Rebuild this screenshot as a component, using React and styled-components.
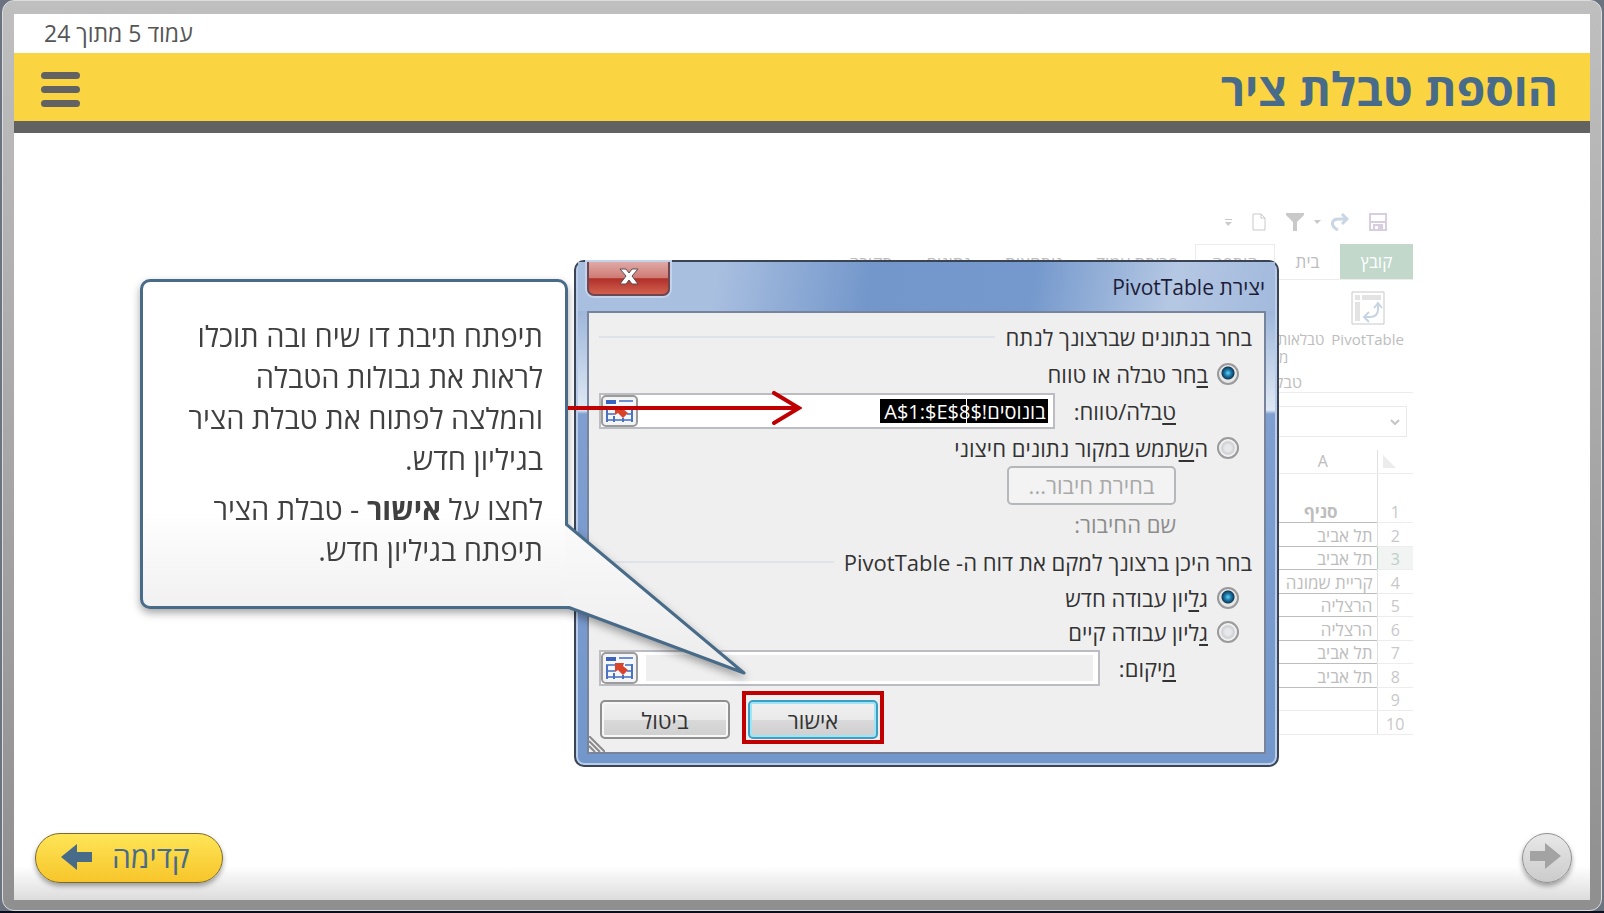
import React from "react";
import styled, { createGlobalStyle } from "styled-components";

const tabs = ["הוספה", "פריסת עמוד", "נוסחאות", "נתונים", "סקירה"];

const rows = [
  { id: 1, text: "סניף", head: true },
  { id: 2, text: "תל אביב" },
  { id: 3, text: "תל אביב", active: true },
  { id: 4, text: "קריית שמונה" },
  { id: 5, text: "הרצליה" },
  { id: 6, text: "הרצליה" },
  { id: 7, text: "תל אביב" },
  { id: 8, text: "תל אביב" },
  { id: 9, text: "" },
  { id: 10, text: "" },
];

export default function App() {
  return (
    <Page>
      <GlobalStyle />
      <Frame>
        <Slide>
          <Counter>עמוד 5 מתוך 24</Counter>
          <Header>
            <Title>הוספת טבלת ציר</Title>
            <MenuButton type='button' aria-label='תפריט'>
              <span />
              <span />
              <span />
            </MenuButton>
          </Header>
          <Stage>
            <Scene>
              <Sheet />
              <PivotDialog />
              <Callout />
            </Scene>
          </Stage>
          <Footer>
            <NextButton type='button'>
              קדימה
              <svg width='31' height='26' viewBox='0 0 31 26'>
                <path d='M0 13 16 0V8H31V18H16V26Z' fill='#486b89' />
              </svg>
            </NextButton>
            <PrevButton type='button' aria-label='אחורה'>
              <svg width='31' height='26' viewBox='0 0 31 26'>
                <path d='M31 13 15 0V8H0V18H15V26Z' fill='#a3a3a3' />
              </svg>
            </PrevButton>
          </Footer>
        </Slide>
      </Frame>
    </Page>
  );
}

function Sheet() {
  return (
    <SheetWrapper>
      <QuickBar>
        <svg width='18' height='18' viewBox='0 0 18 18' fill='none'>
          <path d='M1 1H17V17H1Z' stroke='#d9cde0' strokeWidth='2' />
          <path d='M2 9H16M5 17V12H13V17' stroke='#d9cde0' strokeWidth='2' />
          <path d='M9 13H12V17H9Z' fill='#d9cde0' />
        </svg>
        <FilterGroup>
          <svg width='18' height='18' viewBox='0 0 18 18' fill='none'>
            <path d='M7 17C-1 13 0 6 8 6H16M11 1 16 6 11 11' stroke='#c9d6e4' strokeWidth='3' />
          </svg>
          <svg width='7' height='4' viewBox='0 0 7 4'>
            <path d='M0 0H7L3 4Z' fill='#c9c9c9' />
          </svg>
          <svg width='18' height='18' viewBox='0 0 18 18'>
            <path d='M0 0H18V2L11 9V18H7V9L0 2Z' fill='#c9c9c9' />
          </svg>
        </FilterGroup>
        <svg width='14' height='18' viewBox='0 0 14 18' fill='none'>
          <path d='M1 1H9L13 5V17H1ZM9 1V5H13' stroke='#c9c9c9' strokeWidth='1' />
        </svg>
        <svg width='7' height='9' viewBox='0 0 7 9'>
          <path d='M0 1H7V2H0ZM0 4H7L3 8Z' fill='#c9c9c9' />
        </svg>
      </QuickBar>
      <TabBar>
        <FileTab>קובץ</FileTab>
        <HomeTab>בית</HomeTab>
        {tabs.map((tab, i) => (
          <Tab key={tab} $active={i === 0}>
            {tab}
          </Tab>
        ))}
      </TabBar>
      <Ribbon>
        <RibbonItem>
          <svg width='34' height='34' viewBox='0 0 34 34' fill='none'>
            <path d='M1 1H33V33H1Z' stroke='#c8c8c8' />
            <path d='M4 4H9V9H4ZM11 4H30V9H11ZM4 11H9V30H4Z' fill='#e3e3e3' />
            <path d='M14 26H19Q27 26 27 18V13M23 17 27 12 31 17M18 21 13 26 18 31' stroke='#c6d4e3' strokeWidth='2' />
          </svg>
          PivotTable
        </RibbonItem>
        <RibbonItem>
          <svg width='34' height='34' viewBox='0 0 34 34' fill='none'>
            <circle cx='28' cy='18' r='5' fill='#d3dfec' />
          </svg>
          <span>טבלאות PivotTable</span>
          <span>מומלצות</span>
        </RibbonItem>
        <RibbonGroup>טבלאות</RibbonGroup>
      </Ribbon>
      <FormulaBar>
        <svg width='10' height='6' viewBox='0 0 10 6' fill='none'>
          <path d='M1 1 5 5 9 1' stroke='#c4c4c4' strokeWidth='2' />
        </svg>
      </FormulaBar>
      <Grid>
        <thead>
          <tr>
            <th>
              <svg width='13' height='13' viewBox='0 0 13 13'>
                <path d='M0 0V13H13Z' fill='#ececec' />
              </svg>
            </th>
            <th>A</th>
          </tr>
        </thead>
        <tbody>
          {rows.map((row) => (
            <GridRow key={row.id} $head={row.head} $active={row.active} $filled={row.text !== ""}>
              <th>{row.id}</th>
              <td>{row.text}</td>
            </GridRow>
          ))}
        </tbody>
      </Grid>
    </SheetWrapper>
  );
}

function RangeIcon() {
  return (
    <svg width='28' height='24' viewBox='0 0 28 24'>
      <rect width='28' height='24' fill='#f4f7fd' />
      <path d='M0 1H10V5H0Z' fill='#3b63bd' />
      <path d='M13 2H27M0 9H9M19 9H27M0 15H9M21 15H27M0 21H27' stroke='#6d8fd0' strokeWidth='2' />
      <path d='M1 9V23M8 17V23M17 19V23M26 8V23' stroke='#4a72c0' strokeWidth='2' />
      <path d='M9 7H18L17 10L22 14L17 19L12 14L9 16Z' fill='#d9432a' />
    </svg>
  );
}

function PivotDialog() {
  return (
    <Dialog role='dialog' aria-labelledby='dialog-title'>
      <TitleBar>
        <DialogTitle id='dialog-title'>יצירת PivotTable</DialogTitle>
        <CloseButton type='button' aria-label='סגור'>
          <svg width='20' height='17' viewBox='0 0 20 17'>
            <path
              d='M1 1H7L10 5L13 1H19L13 8L19 16H13L10 12L7 16H1L7 8Z'
              fill='#fff'
              stroke='#5a4a50'
              strokeWidth='1'
            />
          </svg>
        </CloseButton>
      </TitleBar>
      <Client>
        <Section>בחר בנתונים שברצונך לנתח</Section>
        <RadioRow>
          <input type='radio' name='source' defaultChecked />
          <span>
            <u>ב</u>חר טבלה או טווח
          </span>
        </RadioRow>
        <FieldRow>
          <label htmlFor='range'>
            <u>ט</u>בלה/טווח:
          </label>
          <Field>
            <SelectedInput id='range' defaultValue='בונוסים!$A$1:$E$8' />
            <Caret />
            <PickButton type='button' aria-label='בחירת טווח'>
              <RangeIcon />
            </PickButton>
          </Field>
        </FieldRow>
        <RadioRow>
          <input type='radio' name='source' />
          <span>
            ה<u>ש</u>תמש במקור נתונים חיצוני
          </span>
        </RadioRow>
        <FieldRow>
          <ConnectionButton type='button' disabled>
            בחירת חיבור...
          </ConnectionButton>
        </FieldRow>
        <ConnectionName>שם החיבור:</ConnectionName>
        <Section>בחר היכן ברצונך למקם את דוח ה- PivotTable</Section>
        <PlaceGroup>
          <RadioRow $compact>
            <input type='radio' name='place' defaultChecked />
            <span>
              ג<u>ל</u>יון עבודה חדש
            </span>
          </RadioRow>
          <RadioRow $compact>
            <input type='radio' name='place' />
            <span>
              <u>ג</u>ליון עבודה קיים
            </span>
          </RadioRow>
        </PlaceGroup>
        <FieldRow>
          <label htmlFor='location'>
            <u>מ</u>יקום:
          </label>
          <Field>
            <LocationInput id='location' />
            <PickButton type='button' aria-label='בחירת מיקום'>
              <RangeIcon />
            </PickButton>
          </Field>
        </FieldRow>
        <Actions>
          <Highlight>
            <ActionButton type='button' $primary>
              אישור
            </ActionButton>
          </Highlight>
          <ActionButton type='button'>ביטול</ActionButton>
        </Actions>
        <Grip width='16' height='16' viewBox='0 0 16 16'>
          <path d='M0 0 16 16M0 5 11 16M0 10 6 16' stroke='#8a8a8a' strokeWidth='2' />
        </Grip>
      </Client>
    </Dialog>
  );
}

function Callout() {
  return (
    <CalloutWrapper>
      <Bubble>
        <p>תיפתח תיבת דו שיח ובה תוכלו לראות את גבולות הטבלה והמלצה לפתוח את טבלת הציר בגיליון חדש.</p>
        <p>
          לחצו על <b>אישור</b> - טבלת הציר תיפתח בגיליון חדש.
        </p>
        <Tail width='182' height='154' viewBox='0 0 182 154'>
          <defs>
            <linearGradient id='tail' x1='0' y1='0' x2='0' y2='1'>
              <stop offset='0' stopColor='#fafafa' />
              <stop offset='1' stopColor='#ececec' />
            </linearGradient>
          </defs>
          <path d='M0 1H2L179 150L4 84L0 83Z' fill='url(#tail)' />
          <path d='M1 0V1L179 150L4 84.5H0' fill='none' stroke='#486b89' strokeWidth='3' strokeLinejoin='round' />
        </Tail>
      </Bubble>
      <Arrow width='234' height='34' viewBox='0 0 234 34'>
        <path d='M0 17H230M206 2 231 17 206 32' fill='none' stroke='#c00000' strokeWidth='4' strokeLinecap='round' />
      </Arrow>
    </CalloutWrapper>
  );
}

const GlobalStyle = createGlobalStyle`
  * {
    box-sizing: border-box;
  }
  body {
    margin: 0;
    background: #0b0d1c;
  }
  body, button, input {
    font-family: "Open Sans", "Noto Sans", "DejaVu Sans", sans-serif;
  }
  h1, h2, p {
    margin: 0;
  }
  svg {
    display: block;
    flex: none;
  }
`;

const Page = styled.div`
  display: flex;
  min-height: 100vh;
  padding: 0 2px;
  background: linear-gradient(#6b7280, #6b7280) top / 100% calc(100% - 2px) no-repeat #0b0d1c;
`;
const Frame = styled.div`
  display: flex;
  flex: 1;
  margin-bottom: 2px;
  padding: 13px 11px 10px;
  border: 1px solid #dcdcdc;
  border-radius: 12px;
  background: linear-gradient(#bfbfbf, #8f8f8f);
`;
const Slide = styled.main`
  display: flex;
  flex: 1;
  flex-direction: column;
  background: linear-gradient(#fff, #dcdcdc) bottom / 100% 34px no-repeat #fff;
`;
const Counter = styled.div`
  direction: rtl;
  padding-left: 30px;
  font-size: 23px;
  line-height: 39px;
  text-align: left;
  color: #555;
`;
const Header = styled.header`
  display: flex;
  align-items: center;
  justify-content: space-between;
  direction: rtl;
  height: 80px;
  padding: 0 32px 0 27px;
  border-bottom: 12px solid #626262;
  background: #fad541;
`;
const Title = styled.h1`
  padding-top: 2px;
  font-size: 46px;
  line-height: 66px;
  color: #486b89;
`;
const MenuButton = styled.button`
  display: flex;
  flex-direction: column;
  gap: 7px;
  padding: 4px 0 0;
  border: 0;
  background: none;
  span {
    width: 39px;
    height: 7px;
    border-radius: 4px;
    background: #626262;
  }
`;
const Stage = styled.section`
  display: flex;
  justify-content: center;
  padding: 72px 51px 0 0;
`;
const Scene = styled.div`
  display: grid;
  grid-template-columns: 434px 705px 134px;
  align-items: start;
`;
const Footer = styled.footer`
  display: flex;
  align-items: center;
  justify-content: space-between;
  margin-top: auto;
  padding: 0 18px 17px 21px;
`;
const NextButton = styled.button`
  display: flex;
  align-items: center;
  gap: 20px;
  direction: rtl;
  height: 50px;
  padding: 0 32px 2px 25px;
  border: 1px solid #7a6a2c;
  border-radius: 25px;
  background: linear-gradient(#fee557, #f7c52a);
  box-shadow: 0 3px 5px rgba(0, 0, 0, 0.35);
  font-size: 30px;
  line-height: 46px;
  color: #486b89;
`;
const PrevButton = styled.button`
  display: flex;
  align-items: center;
  justify-content: center;
  width: 50px;
  height: 50px;
  padding: 0 3px 4px 0;
  border: 1px solid #8f8f8f;
  border-radius: 50%;
  background: linear-gradient(#e8e8e8, #cbcbcb);
  box-shadow: 0 3px 5px rgba(0, 0, 0, 0.35);
`;

const SheetWrapper = styled.div`
  grid-area: 1 / 2 / 2 / 4;
  direction: rtl;
  font-size: 16px;
  color: #bdbdbd;
`;
const QuickBar = styled.div`
  display: flex;
  align-items: center;
  gap: 20px;
  height: 39px;
  padding: 0 26px 5px 0;
`;
const FilterGroup = styled.div`
  display: flex;
  align-items: center;
  gap: 10px;
`;
const TabBar = styled.div`
  display: flex;
  height: 36px;
  border-bottom: 1px solid #ececec;
  font-size: 17px;
  line-height: 36px;
`;
const FileTab = styled.div`
  width: 73px;
  text-align: center;
  background: #c1d8cb;
  color: #fff;
`;
const HomeTab = styled.div`
  width: 65px;
  text-align: center;
`;
const Tab = styled.div`
  padding: 0 16px;
  border: ${(p) => (p.$active ? "1px solid #ececec" : "1px solid transparent")};
  border-bottom: 0;
`;
const Ribbon = styled.div`
  display: grid;
  grid-template-columns: auto auto 1fr;
  grid-template-rows: 82px 30px;
  column-gap: 7px;
  padding-right: 9px;
  border-bottom: 1px solid #ececec;
`;
const RibbonItem = styled.div`
  display: flex;
  flex-direction: column;
  align-items: center;
  padding-top: 11px;
  font-size: 15px;
  line-height: 18px;
  svg {
    margin-bottom: 5px;
  }
`;
const RibbonGroup = styled.div`
  grid-row: 2;
  grid-column: 1 / 4;
  padding-right: 102px;
  line-height: 40px;
`;
const FormulaBar = styled.div`
  display: flex;
  align-items: center;
  height: 31px;
  margin: 13px 6px 13px 0;
  padding-right: 6px;
  border: 1px solid #e9e9e9;
`;
const Grid = styled.table`
  width: 144px;
  table-layout: fixed;
  border-collapse: collapse;
  line-height: 20px;
  th,
  td {
    height: 23px;
    padding: 0;
    border-bottom: 1px solid #ededed;
    font-weight: 400;
  }
  th:first-child {
    width: 36px;
    border-left: 1px solid #e0e0e0;
  }
  thead svg {
    margin-right: 17px;
  }
`;
const GridRow = styled.tr`
  th,
  td {
    height: ${(p) => (p.$head ? "49px" : "23px")};
    vertical-align: bottom;
  }
  &:nth-child(even) th,
  &:nth-child(even) td {
    height: 24px;
  }
  && th {
    color: ${(p) => (p.$active ? "#b9d0c4" : "#c8c8c8")};
    background: ${(p) => (p.$active ? "#f1f4f2" : "none")};
    border-left-color: ${(p) => (p.$active ? "#b4d3c2" : "#e0e0e0")};
  }
  && td {
    padding-right: 4px;
    border-bottom-color: ${(p) => (p.$filled ? "#bdbdbd" : "#ededed")};
    font-size: 17px;
    font-weight: ${(p) => (p.$head ? 700 : 400)};
    text-align: ${(p) => (p.$head ? "center" : "right")};
    white-space: nowrap;
  }
`;

const Dialog = styled.div`
  grid-area: 1 / 2;
  z-index: 1;
  direction: rtl;
  margin-top: 55px;
  padding: 0 11px 11px;
  border: 2px solid #3b4454;
  border-radius: 10px;
  background: linear-gradient(
    #a9bfe0 0,
    #9fb7db 50px,
    #dfe8f4 148px,
    #7f9fd0 152px,
    #7397cb 100%
  );
  box-shadow: inset 0 0 0 2px #b9cdea;
`;
const TitleBar = styled.div`
  display: flex;
  justify-content: space-between;
  height: 49px;
  margin: 0 -9px;
  padding: 0 0 0 9px;
  background: linear-gradient(100deg, #a9bfe0 20%, #7397cb 42%, #7599cd 65%, #b5c8e3 85%, #a3badd);
`;
const DialogTitle = styled.h2`
  padding-right: 10px;
  font-size: 21px;
  font-weight: 400;
  line-height: 50px;
  color: #1c1c38;
`;
const CloseButton = styled.button`
  display: flex;
  justify-content: center;
  align-items: center;
  width: 83px;
  height: 34px;
  padding: 0 0 4px;
  border: 2px solid #6e4650;
  border-top: 0;
  border-radius: 0 0 7px 7px;
  background: linear-gradient(#dfa9a6 0, #cf7a74 50%, #b0302a 52%, #d2604e 100%);
  box-shadow: 0 0 0 2px #c3d3ec;
`;
const Client = styled.div`
  position: relative;
  display: flex;
  flex-direction: column;
  gap: 1px;
  padding: 6px 12px 8px 10px;
  border: 2px solid #77849b;
  background: #efefef;
  font-size: 22px;
  color: #333;
  u {
    text-decoration-thickness: 2px;
    text-underline-offset: 3px;
  }
`;
const Section = styled.div`
  display: flex;
  align-items: center;
  gap: 10px;
  height: 36px;
  white-space: nowrap;
  &::after {
    content: "";
    flex: 1;
    height: 2px;
    background: #dde3e8;
  }
`;
const RadioRow = styled.label`
  display: flex;
  align-items: center;
  gap: 9px;
  height: ${(p) => (p.$compact ? "34px" : "36px")};
  padding-right: 13px;
  input {
    appearance: none;
    width: 22px;
    height: 22px;
    margin: 0;
    border: 2px solid #9a9a9a;
    border-radius: 50%;
    background: radial-gradient(circle, #e8e8ea 0 3px, #cfd1d6 6px, #f4f4f4 8px);
  }
  input:checked {
    background: radial-gradient(circle at 9px 8px, #6fd0f2 0, #1b7fb0 3px, #123a58 6px, #e6e6e6 7px);
  }
`;
const FieldRow = styled.div`
  display: flex;
  align-items: center;
  gap: 19px;
  height: 36px;
  padding-right: 76px;
`;
const Field = styled.div`
  position: relative;
  display: flex;
  flex: 1;
  align-items: center;
  justify-content: space-between;
  height: 36px;
  padding-right: 5px;
  border: 2px solid #bcbdc3;
  background: #fff;
`;
const SelectedInput = styled.input`
  width: 168px;
  height: 24px;
  padding: 0 2px;
  border: 0;
  background: #000;
  font-size: 20px;
  color: #fff;
`;
const Caret = styled.span`
  position: absolute;
  top: 4px;
  right: 86px;
  width: 1px;
  height: 24px;
  background: #fff;
`;
const LocationInput = styled.input`
  flex: 1;
  min-width: 0;
  height: 26px;
  margin-left: 8px;
  border: 0;
  background: #efefef;
  font-size: 20px;
`;
const PickButton = styled.button`
  display: flex;
  align-items: center;
  justify-content: center;
  width: 37px;
  height: 32px;
  padding: 0;
  border: 2px solid #9b9b9b;
  border-radius: 5px;
  background: #f3f3f3;
`;
const ConnectionButton = styled.button`
  width: 169px;
  height: 39px;
  padding: 0;
  border: 2px solid #b5b7bb;
  border-radius: 5px;
  background: #f3f3f3;
  font-size: 22px;
  color: #a9a9a9;
`;
const ConnectionName = styled.div`
  height: 39px;
  padding: 2px 76px 0 0;
  line-height: 36px;
  color: #8c8c8c;
`;
const PlaceGroup = styled.div`
  display: flex;
  flex-direction: column;
`;
const Actions = styled.div`
  display: flex;
  align-items: center;
  justify-content: flex-end;
  gap: 12px;
  padding-top: 4px;
  padding-left: 1px;
  > button {
    margin-top: 4px;
  }
`;
const Highlight = styled.div`
  padding: 5px 2px 1px;
  border: 4px solid #c00000;
`;
const ActionButton = styled.button`
  display: block;
  width: 130px;
  height: 39px;
  padding: 0;
  border: 2px solid ${(p) => (p.$primary ? "#3d9fc2" : "#8f8f8f")};
  border-radius: 5px;
  background: linear-gradient(#f1f1f1 0, #e9e9e9 50%, #d9d9d9 52%, #cfcfcf 100%);
  box-shadow: inset 0 0 0 2px ${(p) => (p.$primary ? "#9fe3f7" : "#f7f7f7")};
  font-size: 22px;
  line-height: 32px;
  color: #333;
`;
const Grip = styled.svg`
  position: absolute;
  left: 0;
  bottom: 0;
`;

const CalloutWrapper = styled.aside`
  grid-area: 1 / 1;
  position: relative;
  z-index: 2;
  margin: 74px 6px 0 0;
`;
const Bubble = styled.div`
  position: relative;
  direction: rtl;
  min-height: 330px;
  padding: 33px 22px 0 40px;
  border: 3px solid #486b89;
  border-radius: 10px 10px 0 10px;
  background: linear-gradient(#fff 70%, #f1f1f1);
  filter: drop-shadow(0 4px 4px rgba(0, 0, 0, 0.35));
  font-size: 29px;
  line-height: 41px;
  color: #404040;
  p + p {
    margin-top: 9px;
  }
`;
const Tail = styled.svg`
  position: absolute;
  left: 100%;
  top: 241px;
`;
const Arrow = styled.svg`
  position: absolute;
  left: 100%;
  top: 112px;
`;
